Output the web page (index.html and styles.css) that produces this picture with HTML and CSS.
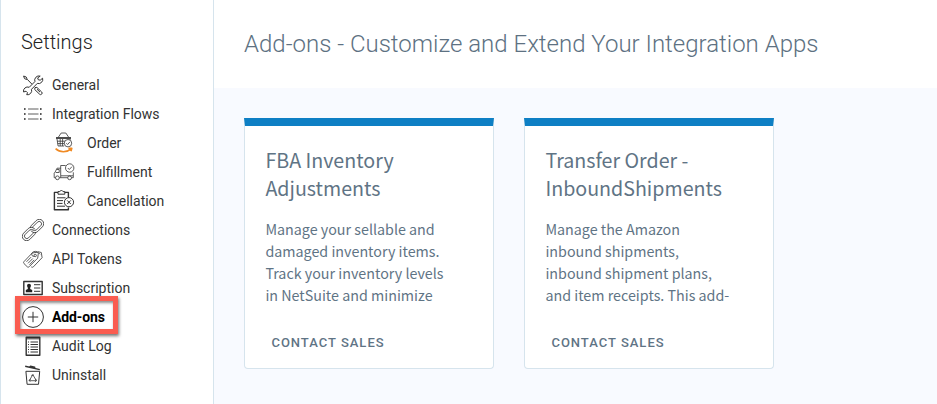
FILE: index.html
```html
<!DOCTYPE html>
<html lang="en">
<head>
    <meta charset="UTF-8">
    <meta name="viewport" content="width=device-width, initial-scale=1.0">
    <title>Add-ons</title>
    <link rel="stylesheet" href="styles.css">
</head>
<body>
    <aside class="sidebar">
        <h2>Settings</h2>
        <ul class="menu">
            <li>
                <svg class="icon" viewBox="0 0 22 22">
                    <path d="M1.6 2l2.6 1 .9 2.2 4.8 4.9M1.6 2l.9 2.6 2.3 1M13 13.6l1.9-.2 4.8 4.6a1.5 1.5 0 0 1-2.2 2.1l-4.8-4.6.3-1.9zM15 15.2l3 2.9"/>
                    <path d="M18.2 2.1a4.3 4.3 0 0 0-5.3 5.5L7.2 13.3A4.1 4.1 0 0 0 1.6 18l2.4-.8 1.5 1.5-.8 2a4.2 4.2 0 0 0 4.8-5.4l5.8-5.9a4.2 4.2 0 0 0 5.3-5.2l-2.4 2-2-.5-.5-1.8z"/>
                </svg>
                <span>General</span>
            </li>
            <li>
                <svg class="icon" viewBox="0 0 22 22">
                    <path class="thin" d="M6 6h10.5M6 11h10.5M6 16h10.5"/>
                    <path class="solid" d="M2 5.2h1.6v1.6H2zM2 10.2h1.6v1.6H2zM2 15.2h1.6v1.6H2zM18 5.2h1.6v1.6H18zM18 10.2h1.6v1.6H18zM18 15.2h1.6v1.6H18z"/>
                </svg>
                <span>Integration Flows</span>
            </li>
            <li class="child">
                <svg class="icon" viewBox="0 0 22 22">
                    <path class="solid" d="M3 5.2h15v1.6H3z"/>
                    <path class="thin" d="M5.2 5.4l3-4.4h4.6l3 4.4M4 7l1.1 7h6M7.2 7v7M9.6 7v7M4.2 9.2h7.5M4.6 11.6h6.4M17 7v1"/>
                    <circle class="thin" cx="15" cy="11.2" r="3.7"/>
                    <path class="thin" d="M13.3 11.2l1.3 1.3 2.3-2.6"/>
                    <path class="orange" d="M2.6 16.6c4.4 4.2 11.2 4 15.6.2M15.4 16.4l3.4-.1-.8 3"/>
                </svg>
                <span>Order</span>
            </li>
            <li class="child">
                <svg class="icon" viewBox="0 0 22 22">
                    <path class="thin" d="M12.6 4.5H7.7v12.2h7M7.7 7.2H4L2.2 11l-1 1.2v4.5h1.3M3.8 8.5h2.4v3H2.8M6.3 16.7h1.4M18.5 16.7h1.8V11.3M8 14.8h12"/>
                    <circle class="thin" cx="4.4" cy="16.8" r="1.9"/>
                    <circle class="thin" cx="16.6" cy="16.8" r="1.9"/>
                    <circle class="thin" cx="16.7" cy="7" r="4.2"/>
                    <path class="thin" d="M14.8 7l1.5 1.5L19 5.6"/>
                </svg>
                <span>Fulfillment</span>
            </li>
            <li class="child">
                <svg class="icon" viewBox="0 0 22 22">
                    <path class="heavy" d="M5 2.4H1.4v17.4h14v-2.4M11.8 2.4h3.6v5"/>
                    <path d="M5 4.2h6.8V1.6H10a1.7 1.7 0 0 0-3.2 0H5zM4 7.8h8.5M4 10.6h6M4 13.4h5.5M4 16.2h8"/>
                    <circle cx="16" cy="12.2" r="4.6"/>
                    <path d="M14.2 10.4l3.6 3.6M17.8 10.4l-3.6 3.6"/>
                </svg>
                <span>Cancellation</span>
            </li>
            <li>
                <svg class="icon" viewBox="0 0 22 22">
                    <g transform="rotate(-45 11 11)">
                        <path class="thin" d="M11.4 14.4a4.4 4.4 0 0 1-2.8 1H2.1a4.4 4.4 0 0 1 0-8.8h6.5a4.4 4.4 0 0 1 4.2 5.6M10.6 7.6a4.4 4.4 0 0 1 2.8-1h6.5a4.4 4.4 0 0 1 0 8.8h-6.5a4.4 4.4 0 0 1-4.2-5.6"/>
                        <path class="thin" d="M9.6 13a2.3 2.3 0 0 1-1.2.4H2.3a2.4 2.4 0 0 1 0-4.8h6.1a2.4 2.4 0 0 1 2.3 3.1M12.4 9a2.3 2.3 0 0 1 1.2-.4h6.1a2.4 2.4 0 0 1 0 4.8h-6.1a2.4 2.4 0 0 1-2.3-3.1"/>
                    </g>
                </svg>
                <span>Connections</span>
            </li>
            <li>
                <svg class="icon" viewBox="0 0 22 22">
                    <path class="thin" d="M2 13.6L10.2 5l5.4-.8.7 1.2-.6 4.8-8.5 8.5c-.7.6-1.4.6-2 0L2 15.6c-.6-.7-.6-1.3 0-2z"/>
                    <path class="thin" d="M16 3.7l3.3.8.8 5.2-8.7 9.1c-.7.6-1.5.6-2.2 0M4.5 13.8l4.6-4.7M6 15.3l4.8-4.8M7.5 16.7l4.7-4.8"/>
                    <circle class="thin" cx="13.2" cy="7.5" r="1.2"/>
                    <path class="thin" d="M12.5 8.3c-3.4.8-3.8-3.8-.6-4.7 2.7-.8 4.1.5 6.2 2.7"/>
                </svg>
                <span>API Tokens</span>
            </li>
            <li>
                <svg class="icon" viewBox="0 0 22 22">
                    <path class="heavy" d="M1.8 4.5h18.4v13H1.8z"/>
                    <circle class="solid" cx="7" cy="8.8" r="2"/>
                    <path class="solid" d="M3.8 15.3v-2.2l2-1.2V10h2.4v1.9l2 1.2v2.2z"/>
                    <path d="M12 7.7h6.3M12 11h6.3M12 14.3h6.3"/>
                </svg>
                <span>Subscription</span>
            </li>
            <li class="active">
                <svg class="icon" viewBox="0 0 22 22">
                    <circle cx="11" cy="11" r="10.4"/>
                    <path d="M11 5.8v10.4M5.8 11h10.4"/>
                </svg>
                <span>Add-ons</span>
            </li>
            <li>
                <svg class="icon" viewBox="0 0 22 22">
                    <path class="heavy" d="M4.2 2.2h13.6v18H4.2z"/>
                    <path d="M4 3.8h14M8.5 7h7.5M8.5 9.5h7.5M8.5 12h7.5M8.5 14.5h7.5M8.5 17h7.5M6 7h1M6 9.5h1M6 12h1M6 14.5h1M6 17h1"/>
                </svg>
                <span>Audit Log</span>
            </li>
            <li>
                <svg class="icon" viewBox="0 0 22 22">
                    <path class="heavy" d="M3.2 2.2l14.6 3.4M8 3.2l.4-1 4.3.9v1"/>
                    <path d="M3.9 7.3h13.8l-1.2 13H5.1z"/>
                    <path class="thin" d="M10.8 10.6l3.5 6.1H7.3zM9.4 11.4l2.2-.4M13.6 14.8l.8 2-1.5.9M8.4 15l-1.2 1.6 1 1"/>
                </svg>
                <span>Uninstall</span>
            </li>
        </ul>
    </aside>

    <main>
        <header>
            <h1>Add-ons - Customize and Extend Your Integration Apps</h1>
        </header>
        <section class="cards">
            <div class="card">
                <h3>FBA Inventory<br>Adjustments</h3>
                <p>Manage your sellable and<br>damaged inventory items.<br>Track your inventory levels<br>in NetSuite and minimize</p>
                <button type="button">CONTACT SALES</button>
            </div>
            <div class="card">
                <h3>Transfer Order -<br>InboundShipments</h3>
                <p>Manage the Amazon<br>inbound shipments,<br>inbound shipment plans,<br>and item receipts. This add-</p>
                <button type="button">CONTACT SALES</button>
            </div>
        </section>
    </main>
</body>
</html>
```
FILE: styles.css
```css
*, *::after {
    box-sizing: border-box;
}
body {
    margin: 0;
    height: 404px;
    display: flex;
    overflow: hidden;
    font-family: Roboto, sans-serif;
    background-color: #fff;
}
.sidebar {
    width: 214px;
    flex-shrink: 0;
    padding: 28px 0 0 20px;
    border-left: 1px solid #d6e4ed;
    border-right: 1px solid #d6e4ed;
}
.sidebar h2 {
    margin: 0 0 13px;
    font-size: 20px;
    line-height: 29px;
    font-weight: 300;
    color: #222;
}
.menu {
    list-style: none;
    margin: 0;
    padding: 0;
}
.menu li {
    display: flex;
    align-items: center;
    height: 29px;
    gap: 8px;
    padding-left: 1px;
    font-size: 14px;
    color: #333;
    white-space: nowrap;
}
.menu .child {
    padding-left: 32px;
    gap: 12px;
}
.menu .active {
    position: relative;
    font-weight: 700;
    letter-spacing: -0.1px;
    color: #000;
}
/* callout frame around the selected item */
.menu .active::after {
    content: "";
    position: absolute;
    left: -6px;
    top: -6px;
    width: 103px;
    height: 38px;
    border: 5px solid #fa5c50;
    box-shadow: 1px 2px 3px rgba(0, 0, 0, 0.55), inset 1px 2px 3px rgba(0, 0, 0, 0.45);
}
.icon {
    width: 22px;
    height: 22px;
    flex-shrink: 0;
    fill: none;
    stroke: #333;
    stroke-width: 1;
    stroke-linejoin: round;
}
.icon .thin {
    stroke-width: 0.8;
}
.icon .heavy {
    stroke-width: 1.4;
}
.icon .solid {
    fill: #222;
    stroke: none;
}
.icon .orange {
    stroke: #f08a24;
    stroke-width: 1.6;
}
main {
    flex: 1;
    background-color: #f8faff;
}
header {
    height: 88px;
    padding: 28px 0 0 30px;
    background-color: #fff;
}
h1 {
    margin: 0;
    font-size: 24px;
    line-height: 32px;
    font-weight: 300;
    color: #5d7182;
    white-space: nowrap;
}
.cards {
    display: flex;
    gap: 30px;
    padding: 30px;
}
.card {
    width: 250px;
    height: 251px;
    padding: 20px 0 0 20.4px;
    border: 1px solid #d6e4ed;
    border-top: 8px solid #0e7fc4;
    border-radius: 0 0 4px 4px;
    background-color: #fff;
    font-family: "Noto Sans CJK SC", sans-serif;
    color: #5f7485;
    white-space: nowrap;
}
.card h3 {
    margin: 0 0 16px;
    font-size: 19.65px;
    line-height: 28px;
    font-weight: 400;
}
.card p {
    margin: 0 0 24px;
    font-size: 14.3px;
    line-height: 22px;
}
.card button {
    display: block;
    margin: 0;
    padding: 0 6px;
    border: none;
    background: none;
    font-family: Roboto, sans-serif;
    font-size: 13px;
    line-height: 26px;
    font-weight: 500;
    letter-spacing: 1px;
    color: #5f7485;
}
```
